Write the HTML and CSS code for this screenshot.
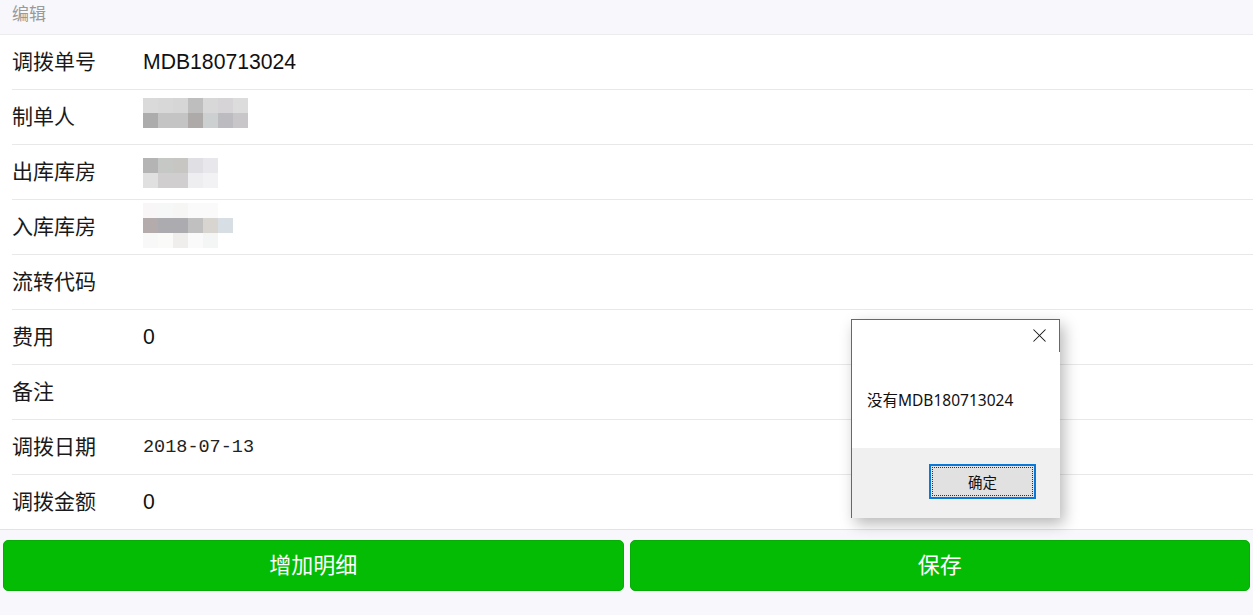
FILE: index.html
```html
<!DOCTYPE html>
<html lang="zh-CN">
<head>
  <meta charset="UTF-8"><title>编辑调拨单</title>
  <meta name="viewport" content="width=device-width,initial-scale=1">
  <link rel="stylesheet" href="styles.css">
</head>
<body>

  <div class="page-title">编辑</div>

  <div class="form-list">
    <div class="row"><span class="label">调拨单号</span><span class="value">MDB180713024</span></div>
    <div class="row"><span class="label">制单人</span><span class="value"><i class="mosaic mosaic-a"></i></span></div>
    <div class="row"><span class="label">出库库房</span><span class="value"><i class="mosaic mosaic-b"></i></span></div>
    <div class="row"><span class="label">入库库房</span><span class="value"><i class="mosaic mosaic-c"></i></span></div>
    <div class="row"><span class="label">流转代码</span><span class="value"></span></div>
    <div class="row"><span class="label">费用</span><span class="value">0</span></div>
    <div class="row"><span class="label">备注</span><span class="value"></span></div>
    <div class="row"><span class="label">调拨日期</span><span class="value date">2018-07-13</span></div>
    <div class="row"><span class="label">调拨金额</span><span class="value">0</span></div>
  </div>

  <div class="actions">
    <button class="btn-green">增加明细</button>
    <button class="btn-green">保存</button>
  </div>

  <!-- alert box -->
  <div class="alert">
    <div class="alert-head"><span class="alert-close"></span></div>
    <div class="alert-msg">没有MDB180713024</div>
    <div class="alert-foot"><button class="alert-ok"><span>确定</span></button></div>
  </div>

</body>
</html>
```

FILE: styles.css
```css
* { margin:0; padding:0; box-sizing:border-box }
body { font-family:"Liberation Sans","Noto Sans CJK SC",sans-serif; background:#fff; color:#111; width:1253px; height:615px; overflow:hidden; position:relative; }

/* title bar */
.page-title { height:35px; background:#f8f7fc; border-bottom:1px solid #ececf0; color:#9a9a9a; font-size:17px;
  padding-left:12px; line-height:30px;
}

/* rows */
.form-list { border-bottom:1px solid #e3e3e3; }
.row { height:55px; margin-left:12px; border-bottom:1px solid #e8e8e8; display:flex; align-items:center; }
.row:last-child { border-bottom:none; height:54px; }
.label { width:131px; font-size:21px; color:#1a1a1a; margin-bottom:4px; }
.value { font-size:21.2px; color:#111; display:flex; align-items:center; }
.date { font-family:"Liberation Mono","Noto Sans CJK SC",monospace; font-size:18.5px; color:#222; }

/* blurred names */
.mosaic { display:block; }
.mosaic-a { width:105px; height:30px; margin-top:-8px;
  background:
    linear-gradient(to right,#dadada 0 15px,#d8d8d8 15px 30px,#d6d6d6 30px 45px,#bebebe 45px 60px,#d8d8d8 60px 75px,#d6d4d6 75px 90px,#dcdcdc 90px) top/100% 50% no-repeat,
    linear-gradient(to right,#acacac 0 15px,#c4c4c4 15px 45px,#aeaaaa 45px 60px,#ccd0d0 60px 75px,#bcbcc0 75px 90px,#c8c6c8 90px) bottom/100% 50% no-repeat;
}
.mosaic-b { width:75px; height:30px; margin-top:2px;
  background:
    linear-gradient(to right,#b4b4b4 0 15px,#c6c8c6 15px 30px,#c8c6c2 30px 45px,#e0e0e4 45px 60px,#e8e8ec 60px) top/100% 50% no-repeat,
    linear-gradient(to right,#e0e0e0 0 15px,#d0cece 15px 45px,#eeeef0 45px 60px,#f2f2f4 60px) bottom/100% 50% no-repeat;
}
.mosaic-c { width:90px; height:45px; margin-top:-4px;
  background:
    linear-gradient(to right,#b4acac 0 15px,#acacb0 15px 45px,#c0c0c0 45px 60px,#d8d4d0 60px 75px,#d8dfe4 75px) center/100% 15px no-repeat,
    linear-gradient(to right,#f8f6f6 0 15px,#f6f8f8 15px 30px,#f6f6f4 30px 45px,#fafafa 45px 75px,#fff 75px) top/100% 15px no-repeat,
    linear-gradient(to right,#f8f8f8 0 15px,#fafaf8 15px 30px,#f0eeec 30px 45px,#fafafa 45px 60px,#f4f6f6 60px 75px,#fff 75px) bottom/100% 15px no-repeat;
}

/* bottom buttons */
.actions { background:#f8f7fc; height:86px; padding:10px 3px 0; display:flex; gap:6px; }
.btn-green { flex:1; height:51px; background:#04bc04; border:1px solid #06ad06; border-radius:5px; color:#fff;
  font-family:"Noto Sans CJK SC",sans-serif; font-size:22px; padding-bottom:5px;
}

/* alert dialog */
.alert { position:absolute; left:851px; top:319px; width:209px; height:199px; background:#fff;
  border-left:1px solid #1c7ad0; border-top:1px solid #1c7ad0;
  box-shadow:4px 6px 14px rgba(0,0,0,.28); display:flex; flex-direction:column;
}
.alert::after { content:""; position:absolute; right:0; top:0; width:1px; height:32px; background:#1c7ad0; }
.alert-head { height:31px; position:relative; }
.alert-close { position:absolute; left:181px; top:9px; width:13px; height:13px; }
.alert-close::before, .alert-close::after { content:""; position:absolute; left:6px; top:-2px; width:1px; height:17px; background:#111; }
.alert-close::before { transform:rotate(45deg); }
.alert-close::after { transform:rotate(-45deg); }
.alert-msg { height:97px; padding:37px 0 0 15px; font-family:"Noto Sans","Noto Sans CJK SC",sans-serif; font-size:15.5px; color:#111; }
.alert-foot { flex:1; background:#f0f0f0; padding:16px 0 0 77px; }
.alert-ok { width:107px; height:35px; background:#e1e1e1; border:2px solid #0a78d7; padding:1px;
  font-family:"Noto Sans CJK SC",sans-serif; font-size:14.5px; color:#111;
}
.alert-ok span { display:flex; align-items:center; justify-content:center; height:100%; border:1px dotted #333; }
```
